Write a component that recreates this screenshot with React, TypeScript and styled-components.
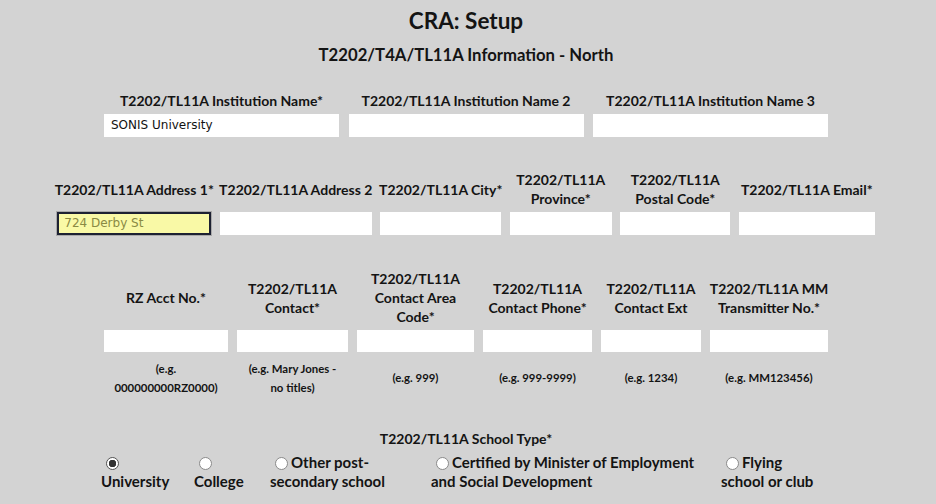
import React from 'react';
import styled, { createGlobalStyle, css } from 'styled-components';

const GlobalStyle = createGlobalStyle`
    body {
        margin: 0;
        background: #d3d3d3;
        font-family: Lato, 'Open Sans', sans-serif;
        color: #141414;
    }
`;

interface Field {
    label: React.ReactNode;
    value?: string;
    focused?: boolean;
    hint?: React.ReactNode;
}

const nameFields: Field[] = [
    { label: 'T2202/TL11A Institution Name*', value: 'SONIS University' },
    { label: 'T2202/TL11A Institution Name 2' },
    { label: 'T2202/TL11A Institution Name 3' },
];

const addressFields: Field[] = [
    { label: 'T2202/TL11A Address 1*', value: '724 Derby St', focused: true },
    { label: 'T2202/TL11A Address 2' },
    { label: 'T2202/TL11A City*' },
    { label: <>T2202/TL11A<br />Province*</> },
    { label: <>T2202/TL11A<br />Postal Code*</> },
    { label: 'T2202/TL11A Email*' },
];

const contactFields: Field[] = [
    { label: 'RZ Acct No.*', hint: <>(e.g.<br />000000000RZ0000)</> },
    { label: <>T2202/TL11A<br />Contact*</>, hint: <>(e.g. Mary Jones -<br />no titles)</> },
    { label: <>T2202/TL11A<br />Contact Area<br />Code*</>, hint: '(e.g. 999)' },
    { label: <>T2202/TL11A<br />Contact Phone*</>, hint: '(e.g. 999-9999)' },
    { label: <>T2202/TL11A<br />Contact Ext</>, hint: '(e.g. 1234)' },
    { label: <>T2202/TL11A MM<br />Transmitter No.*</>, hint: '(e.g. MM123456)' },
];

const schoolTypes = [
    { id: 'univ', label: <><br />University</>, checked: true },
    { id: 'college', label: <><br />College</> },
    { id: 'other', label: <>Other post-<br />secondary school</> },
    { id: 'cert', label: <>Certified by Minister of Employment<br />and Social Development</> },
    { id: 'flying', label: <>Flying<br />school or club</> },
];

const FieldGrid = (props: { fields: Field[]; cols: string; gap: number; labelHeight: number; inputHeight: number }) => {
    const hasHints = props.fields.some((f) => f.hint);
    return (
        <S_Grid cols={props.cols} gap={props.gap}>
            {props.fields.map((f, i) => (
                <S_Label key={'l' + i} height={props.labelHeight}>
                    {f.label}
                </S_Label>
            ))}
            {props.fields.map((f, i) => (
                <S_Input
                    key={'i' + i}
                    height={props.inputHeight}
                    focused={f.focused}
                    defaultValue={f.value ?? ''}
                    type="text"
                />
            ))}
            {hasHints &&
                props.fields.map((f, i) => <S_Hint key={'h' + i}>{f.hint}</S_Hint>)}
        </S_Grid>
    );
};

export default function App(): JSX.Element {
    return (
        <S_Page>
            <GlobalStyle />
            <S_Title>CRA: Setup</S_Title>
            <S_Subtitle>T2202/T4A/TL11A Information - North</S_Subtitle>

            <S_Section top={26}>
                <FieldGrid fields={nameFields} cols="235px 235px 235px" gap={9.5} labelHeight={19} inputHeight={23} />
            </S_Section>

            <S_Section top={33.5}>
                <FieldGrid
                    fields={addressFields}
                    cols="154px 152px 121px 102px 110px 136px"
                    gap={8.5}
                    labelHeight={38}
                    inputHeight={23}
                />
            </S_Section>

            <S_Section top={34.5}>
                <FieldGrid
                    fields={contactFields}
                    cols="124px 111px 117px 109px 100px 118px"
                    gap={9}
                    labelHeight={57}
                    inputHeight={22}
                />
            </S_Section>

            <S_Section top={32}>
                <S_GroupLabel>T2202/TL11A School Type*</S_GroupLabel>
                <S_RadioRow>
                    {schoolTypes.map((s) => (
                        <S_RadioCell key={s.id}>
                            <S_Radio type="radio" name="schoolType" defaultChecked={s.checked} />
                            {s.label}
                        </S_RadioCell>
                    ))}
                </S_RadioRow>
            </S_Section>
        </S_Page>
    );
}

const S_Page = styled.div`
    width: 932px;
    padding-top: 8px;
    display: flex;
    flex-direction: column;
    align-items: center;
`;

const S_Title = styled.h1`
    margin: 0;
    font-size: 22.5px;
    line-height: 26px;
    font-weight: 700;
`;

const S_Subtitle = styled.h2`
    margin: 11px 0 0;
    font-size: 16.7px;
    line-height: 20px;
    font-weight: 700;
`;

const S_Section = styled.section<{ top: number }>`
    margin-top: ${(props) => props.top}px;
    display: flex;
    flex-direction: column;
    align-items: center;
`;

const S_Grid = styled.div<{ cols: string; gap: number }>`
    display: grid;
    grid-template-columns: ${(props) => props.cols};
    column-gap: ${(props) => props.gap}px;
`;

const S_Label = styled.label<{ height: number }>`
    height: ${(props) => props.height}px;
    margin-bottom: 3.5px;
    display: flex;
    align-items: center;
    justify-content: center;
    text-align: center;
    white-space: nowrap;
    font-size: 14px;
    line-height: 19px;
    font-weight: 700;
`;

const S_Input = styled.input<{ height: number; focused?: boolean }>`
    box-sizing: border-box;
    width: 100%;
    height: ${(props) => props.height}px;
    margin: 0;
    padding: 0 6px;
    border: 1px solid #ffffff;
    background: #ffffff;
    font-family: 'DejaVu Sans', Verdana, sans-serif;
    font-size: 12px;
    color: #111111;
    outline: none;
    ${(props) =>
        props.focused &&
        css`
            background: #f9f9a6;
            border: 2px solid #1d2132;
            box-shadow: 0 0 0 1px #a9a9a9;
            color: #8a8a44;
            padding: 0 5px;
        `}
`;

const S_Hint = styled.div`
    margin-top: 7px;
    height: 38px;
    display: flex;
    align-items: center;
    justify-content: center;
    text-align: center;
    white-space: nowrap;
    font-size: 11.4px;
    line-height: 19px;
    font-weight: 700;
`;

const S_GroupLabel = styled.div`
    font-size: 14px;
    line-height: 19px;
    font-weight: 700;
`;

const S_RadioRow = styled.div`
    margin-top: 5px;
    display: grid;
    grid-template-columns: 93px 76px 161px 290px 110px;
`;

const S_RadioCell = styled.label`
    font-size: 15px;
    line-height: 19px;
    font-weight: 700;
    white-space: nowrap;
`;

const S_Radio = styled.input`
    appearance: none;
    box-sizing: border-box;
    width: 13px;
    height: 13px;
    margin: 3px 3px 0 5px;
    vertical-align: -2px;
    border: 1px solid #8a8a8a;
    border-radius: 50%;
    background: #ffffff;
    &:checked {
        background: radial-gradient(circle, #333333 0 3.5px, #ffffff 4px);
        border-color: #555555;
    }
`;
